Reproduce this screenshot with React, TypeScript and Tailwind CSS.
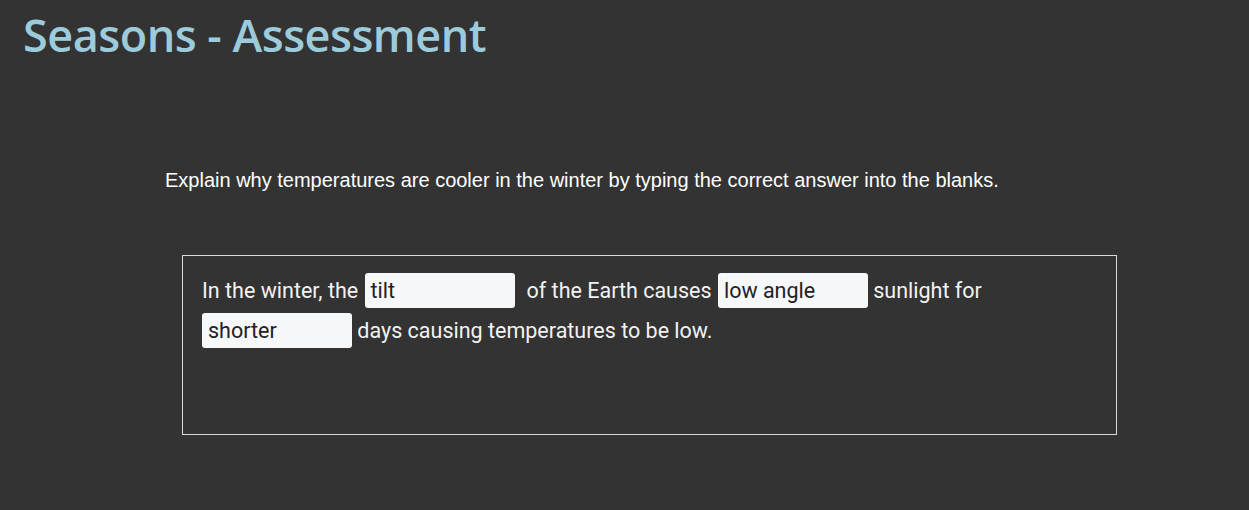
import React from "react";

function Blank({ value, extra = "" }: { value: string; extra?: string }) {
  return (
    <span
      className={`inline-block align-baseline h-[35px] w-[150px] rounded-[3px] bg-[#f6f7f9] text-[#222] px-[6px] leading-[35px] ${extra}`}
    >
      {value}
    </span>
  );
}

export default function App() {
  return (
    <div className="min-h-[510px] w-full bg-[#333333] overflow-hidden">
      <h1
        className="pl-[23px] pt-[5px] text-[45px] leading-[60px] font-semibold text-[#9ccbdc] tracking-[-0.5px]"
        style={{ fontFamily: '"Open Sans", sans-serif' }}
      >
        Seasons - Assessment
      </h1>
      <p
        className="mt-[103px] ml-[165px] text-[20px] leading-[24px] text-white"
        style={{ fontFamily: '"Liberation Sans", Arial, sans-serif' }}
      >
        Explain why temperatures are cooler in the winter by typing the correct answer into the blanks.
      </p>
      <div
        className="mt-[63px] ml-[182px] w-[935px] h-[180px] border border-[#d8d8d8] pl-[19px] pt-[15px] pr-[19px] text-[21.5px] leading-[40px] text-[#f2f2f2]"
        style={{ fontFamily: "Roboto, sans-serif" }}
      >
        <span>In the winter, the</span>{" "}
        <Blank value="tilt" extra="ml-[1px]" />
        <span className="ml-[12px]">of the Earth causes</span>{" "}
        <Blank value="low angle" extra="ml-[1px]" />{" "}
        <span>sunlight for</span>
        <br />
        <Blank value="shorter" />{" "}
        <span>days causing temperatures to be low.</span>
      </div>
    </div>
  );
}
